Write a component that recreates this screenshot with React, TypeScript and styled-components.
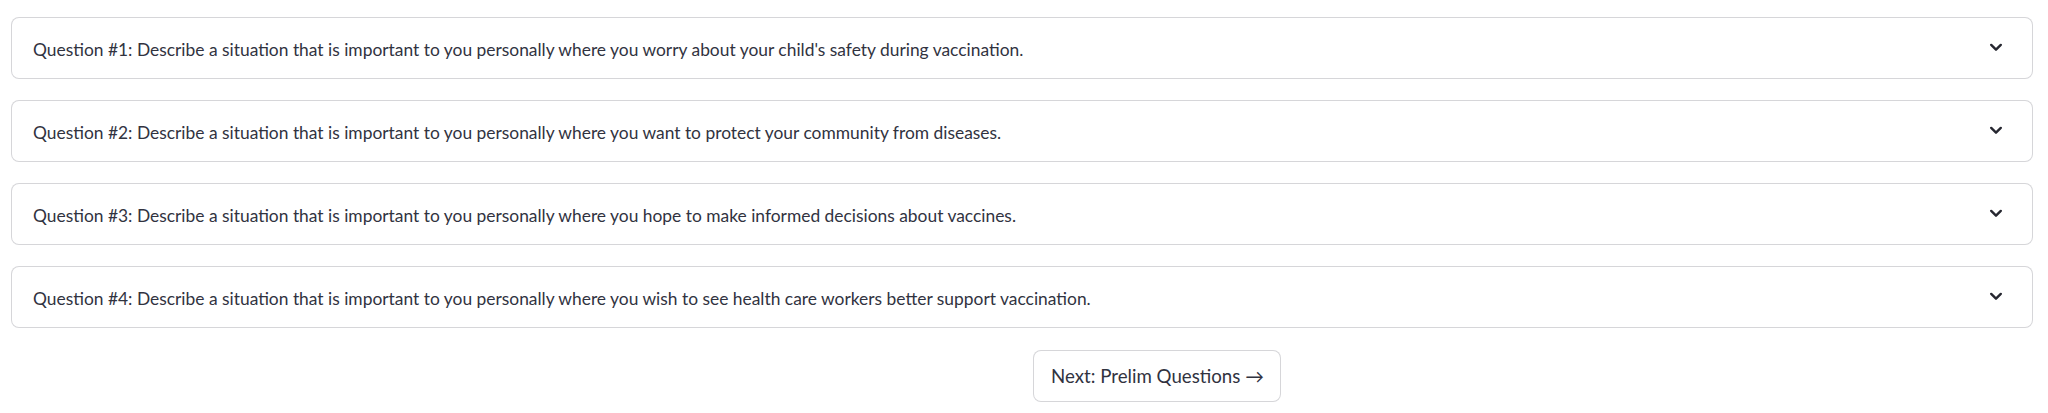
import React from "react";
import styled, { createGlobalStyle } from "styled-components";

const GlobalStyle = createGlobalStyle`
  html, body { margin: 0; padding: 0; background: #ffffff; }
  body {
    font-family: Lato, "Noto Sans", sans-serif;
    color: rgb(49, 51, 63);
  }
`;

const Page = styled.main`
  display: flex;
  flex-direction: column;
  gap: 21px;
  padding: 17px 15px 0 11px;
`;

const Expander = styled.details`
  border: 1px solid rgba(49, 51, 63, 0.2);
  border-radius: 8px;
  background: #ffffff;
`;

const Summary = styled.summary`
  list-style: none;
  display: flex;
  align-items: center;
  justify-content: space-between;
  height: 60px;
  padding: 0 26px 0 21px;
  cursor: pointer;
  &::-webkit-details-marker { display: none; }
`;

const Label = styled.span`
  font-size: 17.4px;
  line-height: 1;
  padding-top: 3px;
  white-space: nowrap;
`;

const Chevron = styled.svg`
  width: 20px;
  height: 20px;
  flex: none;
  margin-top: -3px;
`;

const ButtonRow = styled.div`
  display: grid;
  grid-template-columns: 1fr 1fr;
  column-gap: 22px;
  margin-top: 1px;
`;

const NextButton = styled.button`
  grid-column: 2;
  justify-self: start;
  height: 52px;
  padding: 0 16px 0 17px;
  border: 1px solid rgba(49, 51, 63, 0.2);
  border-radius: 8px;
  background: #ffffff;
  color: rgb(49, 51, 63);
  font-family: Lato, "Noto Sans", sans-serif;
  font-size: 18.7px;
  line-height: 1;
  cursor: pointer;
`;

const questions = [
  "Question #1: Describe a situation that is important to you personally where you worry about your child's safety during vaccination.",
  "Question #2: Describe a situation that is important to you personally where you want to protect your community from diseases.",
  "Question #3: Describe a situation that is important to you personally where you hope to make informed decisions about vaccines.",
  "Question #4: Describe a situation that is important to you personally where you wish to see health care workers better support vaccination.",
];

function ChevronDown() {
  return (
    <Chevron viewBox="0 0 20 20" fill="none" aria-hidden="true">
      <polyline
        points="5.2,7.9 10,12.7 14.8,7.9"
        stroke="rgb(38, 39, 48)"
        strokeWidth="2.4"
        strokeLinecap="round"
        strokeLinejoin="round"
      />
    </Chevron>
  );
}

export default function App() {
  return (
    <>
      <GlobalStyle />
      <Page>
        {questions.map((q) => (
          <Expander key={q}>
            <Summary>
              <Label>{q}</Label>
              <ChevronDown />
            </Summary>
          </Expander>
        ))}
        <ButtonRow>
          <NextButton type="button">Next: Prelim Questions →</NextButton>
        </ButtonRow>
      </Page>
    </>
  );
}
